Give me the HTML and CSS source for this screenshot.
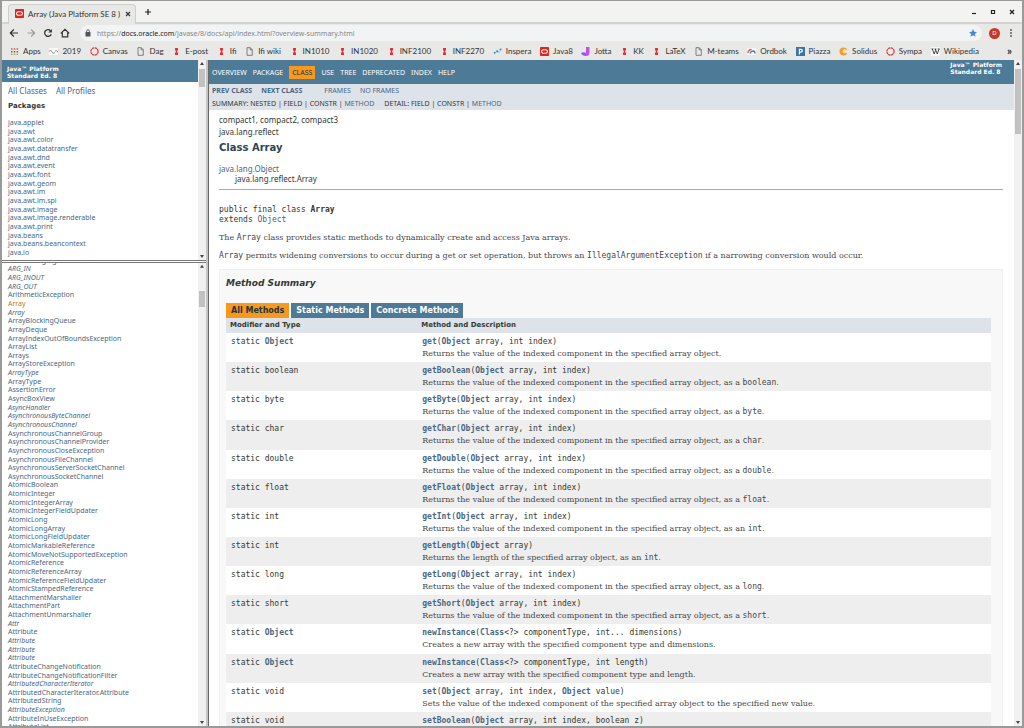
FILE: index.html
```
<!DOCTYPE html>
<html lang="en">
<head>
<meta charset="utf-8">
<title>Array (Java Platform SE 8 )</title>
<link rel="stylesheet" href="styles.css">
</head>
<body>
<svg class="defs" aria-hidden="true">
  <symbol id="dots" viewBox="0 0 9 9"><path d="M3 1h3v2.400H5.200v2H6V8H3V5.400h.8v-2H3z" fill="#e8303a"/></symbol>
  <symbol id="page" viewBox="0 0 9 9"><path d="M2 .7h3.300L7.300 2.700v5.600H2zM5.200.8v2h2" fill="none" stroke="#666" stroke-width=".8"/></symbol>
  <symbol id="ring" viewBox="0 0 9 9"><circle cx="4.500" cy="4.500" r="3.600" fill="none" stroke="#e0393e" stroke-width="1.300" stroke-dasharray="2.300 .5"/></symbol>
  <symbol id="oracle" viewBox="0 0 9 9"><rect width="9" height="9" rx=".8" fill="#e2231a"/><rect x="1.600" y="2.700" width="5.800" height="3.600" rx="1.800" fill="none" stroke="#fff" stroke-width="1.100"/></symbol>
  <symbol id="apps" viewBox="0 0 9 9"><path d="M1 2h1.500M3.800 2h1.500M6.600 2h1.500" stroke="#d9534f" stroke-width="1.400"/><path d="M1 4.700h1.500M3.800 4.700h1.500M6.600 4.700h1.500" stroke="#666" stroke-width="1.400"/><path d="M1 7.400h1.500M3.800 7.400h1.500M6.600 7.400h1.500" stroke="#c09040" stroke-width="1.400"/></symbol>
  <symbol id="y2019" viewBox="0 0 9 9"><rect y="1" width="9" height="7" fill="#fafafa"/><path d="M0 4.500q1.500-2 3 0" fill="none" stroke="#e57" /><path d="M3 5.500q1.500 1.500 3 0" fill="none" stroke="#5a8"/><path d="M6 4q1.500-1 3 1" fill="none" stroke="#e66"/></symbol>
  <symbol id="inspera" viewBox="0 0 9 9"><circle cx="1.700" cy="5.800" r="1" fill="#2f87d0"/><circle cx="4.200" cy="4.300" r="1.100" fill="#2f87d0"/><circle cx="6" cy="5" r=".6" fill="#2f87d0"/><circle cx="7.500" cy="2.600" r="1" fill="#2f87d0"/></symbol>
  <symbol id="jotta" viewBox="0 0 9 9"><path d="M5 0h3.500v5.500Q8.500 9 5 9z" fill="#c44fe8"/><path d="M0 6q2.500-1.500 5 0v3Q1 9 0 6z" fill="#8a5cf0"/></symbol>
  <symbol id="ordbok" viewBox="0 0 9 9"><rect y="1" width="9" height="7" fill="#f6f6f6"/><path d="M1 6q0-3.500 3.500-3.500" fill="none" stroke="#e8564a" stroke-width="1.300"/><path d="M3 6.500q1-2.500 3-2.500t2 2.500" fill="none" stroke="#3b7fd0" stroke-width="1.300"/></symbol>
  <symbol id="piazza" viewBox="0 0 9 9"><rect width="9" height="9" fill="#3c74a6"/><path d="M3.400 7.500V2.300h1.500q1.400 0 1.400 1.400T4.900 5.100H3.500" fill="none" stroke="#fff" stroke-width="1.200"/></symbol>
  <symbol id="solidus" viewBox="0 0 9 9"><circle cx="4.500" cy="4.500" r="4" fill="#f0a030"/><circle cx="5.800" cy="4.200" r="2.200" fill="#f6d9a0"/><path d="M4.500 4.500 9 2.500v4z" fill="#e8e8e6"/></symbol>
  <symbol id="wiki" viewBox="0 0 9 9"><rect width="9" height="9" fill="#f8f8f8"/><path d="M.5 2h2M3.600 2h1.800M6.700 2h1.900M1.300 2l1.900 5L4.600 3.300M4.300 2l2 5L8 2" fill="none" stroke="#222" stroke-width=".8"/></symbol>
</svg>

<div class="window">
  <div class="tabstrip">
    <div class="tab">
      <svg class="icon"><use href="#oracle"/></svg>
      <span class="tab-title">Array (Java Platform SE 8 )</span>
      <button class="glyph" aria-label="Close tab"><svg viewBox="0 0 8 8"><path d="M2 2l4 4M6 2 2 6" stroke="#333" stroke-width="1.100"/></svg></button>
    </div>
    <button class="glyph" aria-label="New tab"><svg viewBox="0 0 8 8"><path d="M4 1v6M1 4h6" stroke="#222" stroke-width="1.200"/></svg></button>
    <div class="window-buttons">
      <button class="glyph" aria-label="Minimize"><svg viewBox="0 0 8 8"><path d="M2 5.500h4" stroke="#222" stroke-width="1.200"/></svg></button>
      <button class="glyph" aria-label="Maximize"><svg viewBox="0 0 8 8"><path d="M2.500 2.500h3v3h-3z" fill="none" stroke="#222" stroke-width="1.200"/></svg></button>
      <button class="glyph" aria-label="Close"><svg viewBox="0 0 8 8"><path d="M2 2l4 4M6 2 2 6" stroke="#222" stroke-width="1.300"/></svg></button>
    </div>
  </div>

  <div class="toolbar">
    <button class="nav-btn" aria-label="Back"><svg viewBox="0 0 10 10"><path d="M9 5H1.500M4.800 1.500 1.300 5l3.500 3.500" fill="none" stroke="#333" stroke-width="1.200"/></svg></button>
    <button class="nav-btn" aria-label="Forward"><svg viewBox="0 0 10 10"><path d="M1.500 5H9M5.200 1.500 8.700 5 5.200 8.500" fill="none" stroke="#999" stroke-width="1.100"/></svg></button>
    <button class="nav-btn" aria-label="Reload"><svg viewBox="0 0 10 10"><path d="M8.200 6.200A3.400 3.400 0 1 1 7.600 2.700" fill="none" stroke="#333" stroke-width="1.300"/><path d="M8.900.9v3.600H5.300z" fill="#333"/></svg></button>
    <button class="nav-btn" aria-label="Home"><svg viewBox="0 0 10 10"><path d="M.8 5.400 5 1.400l4.200 4M2.300 4.600v4.200h5.400V4.600" fill="none" stroke="#333" stroke-width="1.200"/></svg></button>
    <div class="omnibox">
      <svg class="lock" viewBox="0 0 6 8"><rect x=".5" y="3" width="5" height="4.500" rx=".5" fill="#555"/><path d="M1.600 3V2.200a1.400 1.400 0 0 1 2.800 0V3" fill="none" stroke="#555" stroke-width=".9"/></svg>
      <span class="url">https://<b>docs.oracle.com</b>/javase/8/docs/api/index.html?overview-summary.html</span>
      <button class="glyph" aria-label="Bookmark this page"><svg viewBox="0 0 8 8"><path d="M4 0l1.200 2.700 2.800.3-2.100 1.900.6 2.900L4 6.300 1.500 7.800l.6-2.900L0 3l2.800-.3z" fill="#4a87cf"/></svg></button>
    </div>
    <button class="avatar" aria-label="Profile">D</button>
    <button class="glyph" aria-label="Menu"><svg viewBox="0 0 8 8"><path d="M4 .2v1.600M4 3.200v1.600M4 6.200v1.600" stroke="#333" stroke-width="1.500"/></svg></button>
  </div>

  <div class="bookmarks">
    <nav class="bookmark-list" id="bookmarks"></nav>
    <button class="more" aria-label="More bookmarks">»</button>
  </div>

  <div class="frames">
    <div class="side">
      <section class="frame packages">
        <div class="page">
          <h1 class="banner">Java™ Platform<br>Standard Ed. 8</h1>
          <div class="index-links"><a href="#">All Classes</a><a href="#">All Profiles</a></div>
          <h2 class="packages-title">Packages</h2>
          <ul class="links package-links" id="packages"></ul>
        </div>
        <div class="scrollbar bar-packages"><i class="up"></i><i class="thumb"></i><i class="down"></i></div>
      </section>
      <section class="frame classes">
        <div class="page"><ul class="links class-links" id="classes"></ul></div>
        <div class="scrollbar bar-classes"><i class="up"></i><i class="thumb"></i><i class="down"></i></div>
      </section>
    </div>

    <section class="frame main">
      <div class="page">
        <header class="topnav">
          <nav class="topnav-items">
            <a href="#">OVERVIEW</a><a href="#">PACKAGE</a><a class="current" href="#">CLASS</a><a href="#">USE</a><a href="#">TREE</a><a href="#">DEPRECATED</a><a href="#">INDEX</a><a href="#">HELP</a>
          </nav>
          <div class="about">Java™ Platform<br>Standard Ed. 8</div>
        </header>
        <div class="subnav">
          <div class="subnav-row">
            <div class="pair"><a class="strong" href="#">PREV CLASS</a><a class="strong" href="#">NEXT CLASS</a></div>
            <div class="pair"><a href="#">FRAMES</a><a href="#">NO FRAMES</a></div>
          </div>
          <div class="subnav-row detail">
            <span>SUMMARY: NESTED | FIELD | CONSTR | <a href="#">METHOD</a></span>
            <span>DETAIL: FIELD | CONSTR | <a href="#">METHOD</a></span>
          </div>
        </div>
        <main class="content">
          <div class="line">compact1, compact2, compact3</div>
          <div class="line">java.lang.reflect</div>
          <h2 class="class-title">Class Array</h2>
          <ul class="inheritance"><li><a href="#">java.lang.Object</a></li><li class="child">java.lang.reflect.Array</li></ul>
          <hr>
          <pre class="signature">public final class <b>Array</b>
extends <a href="#">Object</a></pre>
          <p>The <code>Array</code> class provides static methods to dynamically create and access Java arrays.</p>
          <p><code>Array</code> permits widening conversions to occur during a get or set operation, but throws an <code>IllegalArgumentException</code> if a narrowing conversion would occur.</p>
          <section class="summary">
            <h3>Method Summary</h3>
            <div class="method-tabs"><button class="active">All Methods</button><button>Static Methods</button><button>Concrete Methods</button></div>
            <table>
              <thead><tr><th class="col-type" scope="col">Modifier and Type</th><th scope="col">Method and Description</th></tr></thead>
              <tbody id="methods"></tbody>
            </table>
          </section>
        </main>
      </div>
      <div class="scrollbar bar-main"><i class="up"></i><i class="thumb"></i><i class="down"></i></div>
    </section>
  </div>
</div>
<script src="page.js"></script>
</body>
</html>
```
FILE: styles.css
```
* { box-sizing: border-box; }
html, body { height: 100%; margin: 0; }
body { overflow: hidden; background: #fff; color: #353833; font-family: "Noto Sans", "DejaVu Sans", sans-serif; font-size: 8px; }
a { color: #4a6782; text-decoration: none; }
button { margin: 0; padding: 0; border: 0; background: none; font: inherit; color: inherit; }
ul { list-style: none; margin: 0; padding: 0; }
svg { display: block; }
.defs { position: absolute; width: 0; height: 0; }

.window { display: flex; flex-direction: column; height: 100vh; border: 1px solid #9a9a98; border-width: 1px 2px 2px; background: #e8e8e6; }

.tabstrip { display: flex; align-items: center; gap: 8px; height: 23px; padding: 0 6px; background: #f3f3f2; border-bottom: 2px solid #d3d3d1; }
.tab { display: flex; align-items: center; align-self: flex-end; gap: 4px; height: 20px; margin-bottom: -2px; padding: 0 3px 2px 6px; border: 1px solid #cfcfcd; border-bottom: 0; border-radius: 4px 4px 0 0; background: #e8e8e6; font: 8px/12px Lato, sans-serif; color: #333; }
.icon { width: 9px; height: 9px; flex: none; }
.glyph svg { width: 8px; height: 8px; }
.window-buttons { display: flex; gap: 11px; margin-left: auto; }

.toolbar { display: flex; align-items: center; gap: 7px; height: 18px; padding: 0 7px; }
.nav-btn svg { width: 10px; height: 10px; }
.omnibox { display: flex; align-items: center; flex: 1; gap: 6px; height: 16px; margin-left: 3px; padding: 0 5px; border-radius: 8px; background: #f1f3f4; font-size: 7px; color: #888; }
.lock { width: 6px; height: 8px; }
.url { flex: 1; }
.url b { font-weight: 400; color: #222; }
.avatar { width: 11px; height: 11px; border-radius: 50%; background: #c5392b; color: #fff; font-size: 6px; line-height: 11px; text-align: center; }

.bookmarks { display: flex; align-items: center; gap: 28px; height: 18px; padding: 0 10px 0 8px; font: 8px/12px Lato, sans-serif; color: #333; }
.bookmark-list { display: flex; flex: 1; justify-content: space-between; }
.bookmark-list a { display: flex; align-items: center; gap: 4px; color: #333; white-space: nowrap; }
.more { font-size: 11px; font-weight: 700; }

.frames { display: flex; flex: 1; min-height: 0; background: #fff; }
.side { display: flex; flex-direction: column; flex: 0 0 20%; min-width: 0; }
.frame { display: flex; min-width: 0; min-height: 0; overflow: hidden; }
.page { display: flex; flex-direction: column; flex: 1; min-width: 0; overflow: hidden; background: #fff; }
.packages { flex: 0 0 30%; }
.classes { flex: 1; border-top: 3px double #777; }
.main { flex: 1; border-left: 2px solid #c4c4c2; }
.main .page { border-left: 1px solid #666; }

.scrollbar { display: flex; flex-direction: column; flex: 0 0 8px; padding: 2px 1px; background: #f0f0f0; }
.scrollbar .up, .scrollbar .down { height: 4px; margin: 0 1px; background: #444; clip-path: polygon(0 75%, 50% 0, 100% 75%); }
.scrollbar .down { margin-top: auto; transform: rotate(180deg); }
.thumb { background: #c1c1c1; }
.bar-packages .thumb { height: 18px; margin-top: 3px; }
.bar-classes .thumb { height: 16px; margin-top: 22px; }
.bar-main .thumb { height: 65px; margin-top: 3px; }

.banner { flex: none; margin: 0; padding: 5px 5px 3px; background: #4d7a97; color: #fff; font: bold 6px/7px "DejaVu Sans", sans-serif; }
.index-links { display: flex; flex: none; gap: 9px; padding: 3px 6px 0; line-height: 12px; }
.packages-title { flex: none; margin: 4px 6px 7px; font: bold 7px/10px "DejaVu Sans", sans-serif; }
.links { display: flex; flex-direction: column; flex: 1; min-height: 0; padding-left: 6px; font-size: 7px; line-height: 9px; white-space: nowrap; }
.links li { flex: 1 1 0; min-height: 0; }
.package-links { margin-bottom: 3px; }
.class-links { margin: -7px 0 -5px; }
.links .active { color: #bb7a2a; }
.iface { font-style: italic; }

.topnav { display: flex; justify-content: space-between; height: 24px; padding-left: 3px; background: #4d7a97; color: #fff; }
.topnav, .subnav, .signature, .content > * { flex: none; }
.topnav-items { display: flex; align-items: center; font-size: 7px; line-height: 13px; }
.topnav-items a { padding: 0 3px; color: #fff; }
.topnav-items a:first-child { padding-left: 0; }
.topnav-items .current { margin: 0 3px; background: #f8981d; color: #253441; }
.about { padding: 1px 12px 0 0; font: bold 6px/7px "DejaVu Sans", sans-serif; }
.subnav { padding: 0 3px; background: #dee3e9; font-size: 7px; line-height: 13px; }
.subnav-row { display: flex; gap: 22px; }
.subnav-row.detail { gap: 10px; }
.pair { display: flex; gap: 9px; }
.strong { font-weight: 700; }

.content { display: flex; flex-direction: column; flex: 1; min-height: 0; padding: 4px 11px 0 10px; }
.line { line-height: 12px; }
.class-title { margin: 4px 0 10px; color: #2c4557; font: bold 10px/12px "DejaVu Sans", sans-serif; }
.inheritance { line-height: 10px; }
.child { padding-left: 16px; }
hr { width: 100%; height: 1px; margin: 5px 0 15px; border: 0; background: #aaa; }
pre, code, .mono { font-family: "DejaVu Sans Mono", monospace; font-size: 8px; }
.signature { margin: 0; line-height: 10px; }
p { margin: 8px 0 0; font: 8px/10px "DejaVu Serif", serif; color: #474747; }
.content .summary { display: flex; flex-direction: column; flex: 1; min-height: 0; margin: 8px 0 -16px; padding: 7px 11px 0 6px; border: 1px solid #f0f0f0; background: #f8f8f8; }
h3 { margin: 0 0 14px; font: italic bold 9px/12px "DejaVu Sans", sans-serif; color: #353833; }
.method-tabs { display: flex; gap: 2px; }
.method-tabs button { padding: 0 5px; background: #4d7a97; color: #fff; font: bold 8px/15px "DejaVu Sans", sans-serif; }
.method-tabs .active { background: #f8981d; color: #253441; }

table { flex: 1; width: 100%; border-collapse: collapse; table-layout: fixed; background: #fff; }
th { height: 15px; padding: 0 4px; background: #dee3e9; font: bold 7px/15px "DejaVu Sans", sans-serif; text-align: left; }
.col-type { width: 25%; }
td { padding: 3px 5px 0; vertical-align: top; line-height: 12px; }
tbody tr:nth-child(even) { background: #eeeeef; }
.mono a { font-weight: 700; }
.desc { font: 8px/12px "DejaVu Serif", serif; color: #474747; }
```
FILE: page.js
```
const bookmarks = [['Apps','apps'],['2019','y2019'],['Canvas','ring'],['Dag','page'],['E-post','dots'],['Ifi','dots'],['Ifi wiki','page'],['IN1010','dots'],['IN1020','dots'],['INF2100','dots'],['INF2270','dots'],['Inspera','inspera'],['Java8','oracle'],['Jotta','jotta'],['KK','dots'],['LaTeX','dots'],['M-teams','page'],['Ordbok','ordbok'],['Piazza','piazza'],['Solidus','solidus'],['Sympa','ring'],['Wikipedia','wiki']];
document.getElementById('bookmarks').innerHTML = bookmarks.map(([name, icon]) =>
  `<a href="#"><svg class="icon"><use href="#${icon}"/></svg>${name}</a>`).join('');

const packages = 'applet awt awt.color awt.datatransfer awt.dnd awt.event awt.font awt.geom awt.im awt.im.spi awt.image awt.image.renderable awt.print beans beans.beancontext io'.split(' ');
document.getElementById('packages').innerHTML = packages.map(p => `<li><a href="#">java.${p}</a></li>`).join('');

// A leading slash marks an interface, a star marks the open class.
const classes = `AreaAveragingScaleFilter /ARG_IN /ARG_INOUT /ARG_OUT ArithmeticException *Array /Array ArrayBlockingQueue ArrayDeque
ArrayIndexOutOfBoundsException ArrayList Arrays ArrayStoreException /ArrayType ArrayType AssertionError AsyncBoxView
/AsyncHandler /AsynchronousByteChannel /AsynchronousChannel AsynchronousChannelGroup AsynchronousChannelProvider
AsynchronousCloseException AsynchronousFileChannel AsynchronousServerSocketChannel AsynchronousSocketChannel
AtomicBoolean AtomicInteger AtomicIntegerArray AtomicIntegerFieldUpdater AtomicLong AtomicLongArray
AtomicLongFieldUpdater AtomicMarkableReference AtomicMoveNotSupportedException AtomicReference AtomicReferenceArray
AtomicReferenceFieldUpdater AtomicStampedReference AttachmentMarshaller AttachmentPart AttachmentUnmarshaller /Attr
Attribute /Attribute /Attribute /Attribute AttributeChangeNotification AttributeChangeNotificationFilter
/AttributedCharacterIterator AttributedCharacterIterator.Attribute AttributedString /AttributeException
AttributeInUseException AttributeList`.split(/\s+/);
document.getElementById('classes').innerHTML = classes.map(c => {
  const cls = c[0] === '/' ? 'iface' : c[0] === '*' ? 'active' : '';
  return `<li><a href="#" class="${cls}">${c.replace(/^[/*]/, '')}</a></li>`;
}).join('');

const object = '<a href="#">Object</a>';
const at = 'Returns the value of the indexed component in the specified array object';
const getter = (type, name) => [type, name, `${object} array, int index`, `${at}, as a${type === 'int' ? 'n' : ''} <code>${type}</code>.`];
const methods = [
  [object, 'get', `${object} array, int index`, `${at}.`],
  getter('boolean', 'getBoolean'), getter('byte', 'getByte'), getter('char', 'getChar'),
  getter('double', 'getDouble'), getter('float', 'getFloat'), getter('int', 'getInt'),
  ['int', 'getLength', `${object} array`, 'Returns the length of the specified array object, as an <code>int</code>.'],
  getter('long', 'getLong'), getter('short', 'getShort'),
  [object, 'newInstance', '<a href="#">Class</a>&lt;?&gt; componentType, int... dimensions', 'Creates a new array with the specified component type and dimensions.'],
  [object, 'newInstance', '<a href="#">Class</a>&lt;?&gt; componentType, int length', 'Creates a new array with the specified component type and length.'],
  ['void', 'set', `${object} array, int index, ${object} value`, 'Sets the value of the indexed component of the specified array object to the specified new value.'],
  ['void', 'setBoolean', `${object} array, int index, boolean z`, 'Sets the value of the indexed component of the specified array object to the specified <code>boolean</code> value.']
];
document.getElementById('methods').innerHTML = methods.map(([type, name, args, text]) =>
  `<tr><td class="mono">static ${type}</td><td><div class="mono"><a href="#">${name}</a>(${args})</div><div class="desc">${text}</div></td></tr>`).join('');
```
